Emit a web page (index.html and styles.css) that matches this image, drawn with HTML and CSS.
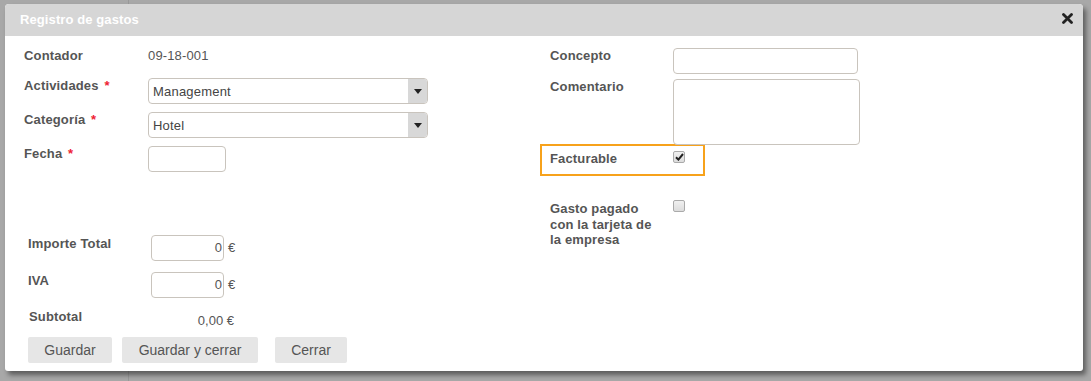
FILE: index.html
```html
<!DOCTYPE html>
<html lang="es">
<head>
<meta charset="utf-8">
<title>Registro de gastos</title>
<link rel="stylesheet" href="styles.css">
</head>
<body>
<div class="backdrop">
  <div class="bg-line"></div>
  <div class="dialog">
    <div class="titlebar">
      <span class="title">Registro de gastos</span>
      <svg class="close" width="11" height="11" viewBox="0 0 11 11"><path d="M1.5 1.5 L9.5 9.5 M9.5 1.5 L1.5 9.5" stroke="#222" stroke-width="2.8" stroke-linecap="round"/></svg>
    </div>
    <div class="content">
      <div class="col-left">
        <div class="row row-short">
          <div class="label">Contador</div>
          <div class="value">09-18-001</div>
        </div>
        <div class="row">
          <div class="label">Actividades <span class="req">*</span></div>
          <div class="select"><span class="sel-text">Management</span><span class="sel-btn"><svg width="8" height="5" viewBox="0 0 8 5"><path d="M0 0 L8 0 L4 5 Z" fill="#222"/></svg></span></div>
        </div>
        <div class="row">
          <div class="label">Categoría <span class="req">*</span></div>
          <div class="select"><span class="sel-text">Hotel</span><span class="sel-btn"><svg width="8" height="5" viewBox="0 0 8 5"><path d="M0 0 L8 0 L4 5 Z" fill="#222"/></svg></span></div>
        </div>
        <div class="row">
          <div class="label">Fecha <span class="req">*</span></div>
          <div class="input date"></div>
        </div>

        <div class="amounts">
          <div class="row amt">
            <div class="label">Importe Total</div>
            <div class="input num">0</div><span class="eur">€</span>
          </div>
          <div class="row amt">
            <div class="label">IVA</div>
            <div class="input num">0</div><span class="eur">€</span>
          </div>
          <div class="row subtotal">
            <div class="label">Subtotal</div>
            <div class="sub-val">0,00 €</div>
          </div>
        </div>

        <div class="buttons">
          <button class="btn b1">Guardar</button>
          <button class="btn b2">Guardar y cerrar</button>
          <button class="btn b3">Cerrar</button>
        </div>
      </div>

      <div class="col-right">
        <div class="row rrow">
          <div class="label">Concepto</div>
          <div class="input wide"></div>
        </div>
        <div class="row rrow r2">
          <div class="label">Comentario</div>
          <div class="input textarea"></div>
        </div>
        <div class="row facturable">
          <div class="label">Facturable</div>
          <span class="checkbox checked"><svg width="9" height="8" viewBox="0 0 9 8"><path d="M1 4.2 L3.4 6.6 L8 1" fill="none" stroke="#222" stroke-width="2"/></svg></span>
        </div>
        <div class="row rrow gasto">
          <div class="label">Gasto pagado con la tarjeta de la empresa</div>
          <span class="checkbox"></span>
        </div>
      </div>
    </div>
  </div>
</div>
</body>
</html>
```

FILE: styles.css
```css
* { box-sizing: border-box; }
html, body { margin: 0; padding: 0; }
body {
  width: 1091px;
  height: 381px;
  overflow: hidden;
  background: #a8a8a8;
  font-family: "Liberation Sans", Arial, sans-serif;
  font-size: 13px;
  color: #555;
}
.backdrop {
  position: relative;
  width: 1091px;
  height: 381px;
  padding: 4px 0 0 5px;
}
.bg-line {
  position: absolute;
  left: 128px;
  top: 0;
  width: 1px;
  height: 381px;
  background: #999;
}
.dialog {
  position: relative;
  width: 1078px;
  height: 367px;
  background: #fff;
  border-radius: 4px 4px 3px 3px;
  box-shadow: 3px 4px 5px rgba(0,0,0,0.45);
  overflow: hidden;
}
.titlebar {
  height: 32px;
  background: #d6d6d6;
  display: flex;
  align-items: center;
  justify-content: space-between;
  padding: 0 10px 0 15px;
}
.title {
  color: #fff;
  font-weight: bold;
  font-size: 13px;
  letter-spacing: 0.1px;
  margin-top: -1px;
}
.close { margin-top: -4px; }
.content {
  display: flex;
  padding: 12px 0 0 19px;
}
.col-left { width: 516px; }
.col-right { width: 400px; }
.row {
  display: flex;
  align-items: flex-start;
  margin-bottom: 8px;
}
.row-short { height: 22px; }
.label {
  width: 124px;
  flex: none;
  font-weight: bold;
  line-height: 15px;
  color: #555;
  letter-spacing: 0.15px;
}
.req { color: #e23; font-weight: bold; margin-left: 2px; }
.value { line-height: 15px; color: #555; letter-spacing: 0.15px; }
.select {
  width: 280px;
  height: 26px;
  border: 1px solid #c9c4bd;
  border-radius: 4px;
  display: flex;
  align-items: center;
  justify-content: space-between;
  overflow: hidden;
}
.sel-text {
  padding-left: 4px;
  padding-top: 1px;
  color: #444;
  letter-spacing: 0.2px;
}
.sel-btn {
  width: 20px;
  height: 26px;
  margin-right: -1px;
  background: #d8d8d8;
  border-radius: 0 6px 6px 0;
  display: flex;
  align-items: center;
  justify-content: center;
}
.input {
  height: 26px;
  border: 1px solid #c9c4bd;
  border-radius: 4px;
  background: #fff;
}
.date { width: 78px; }
.amounts {
  margin-top: 63px;
  padding-left: 4px;
}
.row.amt { margin-bottom: 11px; }
.amt .label { width: 123px; padding-top: 1px; }
.num {
  width: 73px;
  text-align: right;
  padding: 4px 1px 0 0;
  line-height: 16px;
  color: #555;
}
.eur { padding: 5px 0 0 4px; line-height: 16px; color: #555; }
.subtotal { margin-top: 1px; margin-bottom: 0; height: 28px; }
.subtotal .label { width: 123px; padding-left: 1px; }
.sub-val { width: 83px; text-align: right; padding-top: 4px; line-height: 16px; }
.buttons {
  display: flex;
  gap: 10px;
  padding-left: 4px;
}
.btn {
  font-family: "Liberation Sans", Arial, sans-serif;
  font-size: 14px;
  color: #555;
  background: #e6e6e6;
  border: none;
  border-radius: 2px;
  height: 26px;
  padding: 0;
}
.b1 { width: 84px; }
.b2 { width: 136px; }
.b3 { width: 72px; margin-left: 7px; }

.rrow { padding-left: 10px; margin-bottom: 5px; }
.rrow .label { width: 123px; }
.wide { width: 185px; }
.r2 { margin-bottom: 0; }
.textarea { width: 187px; height: 66px; }
.facturable {
  width: 165px;
  height: 32px;
  border: 2px solid #f7a21b;
  margin-top: -1px;
  padding: 5px 0 0 8px;
  margin-bottom: 24px;
}
.facturable .label { width: 123px; }
.checkbox {
  width: 12px;
  height: 12px;
  border: 1px solid #aaa;
  border-radius: 2px;
  background: linear-gradient(#f0f0f0, #dcdcdc);
  display: flex;
  align-items: center;
  justify-content: center;
}
.gasto .label { width: 123px; padding-right: 10px; line-height: 15.5px; padding-top: 1px; }
```
